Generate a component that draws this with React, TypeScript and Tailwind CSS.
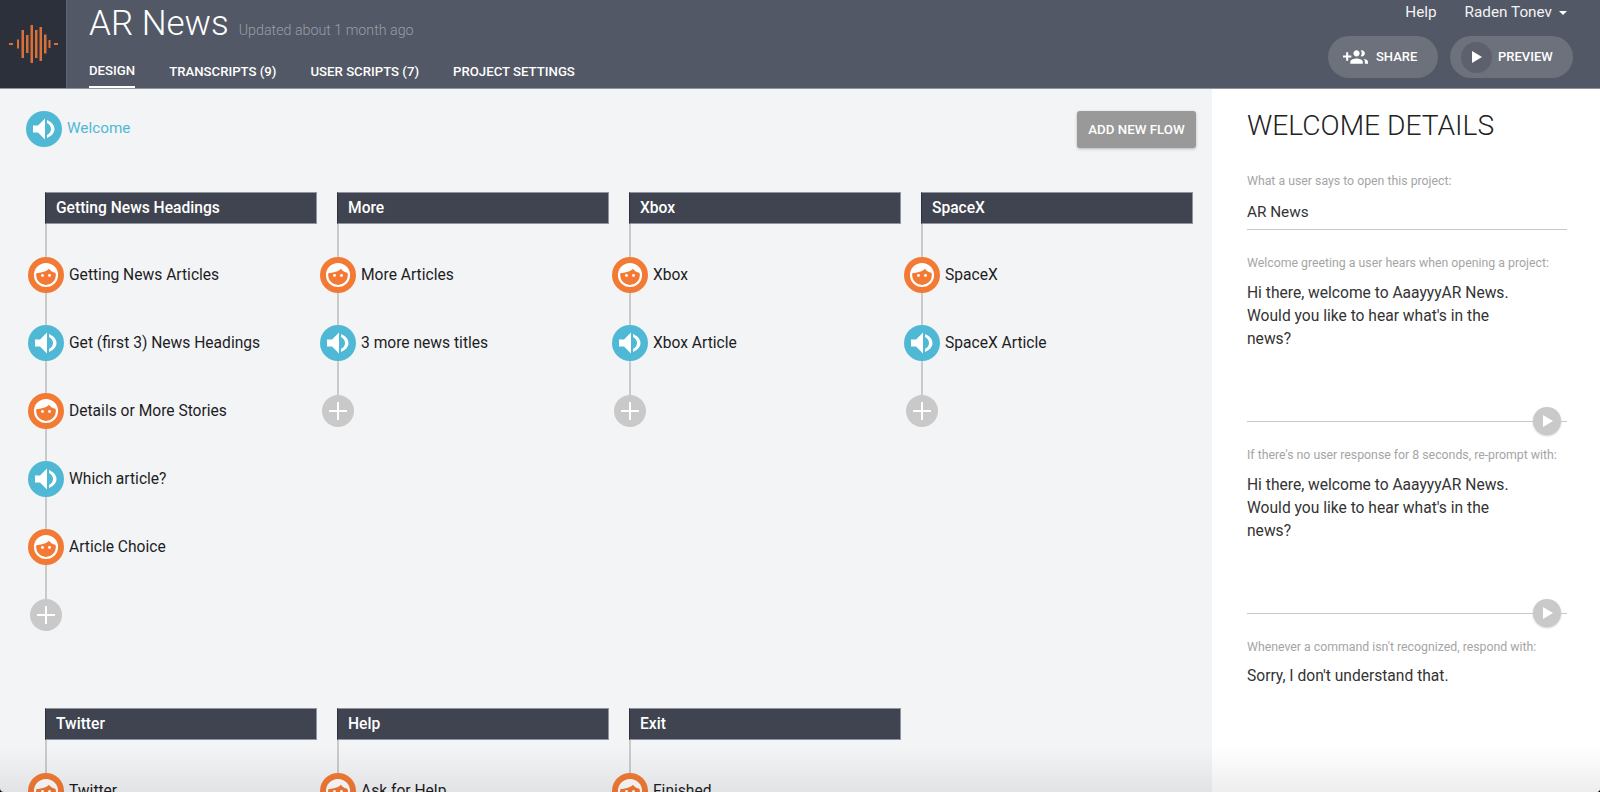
const flows = [
  {
    title: 'Getting News Headings',
    steps: [
      ['user', 'Getting News Articles'],
      ['bot', 'Get (first 3) News Headings'],
      ['user', 'Details or More Stories'],
      ['bot', 'Which article?'],
      ['user', 'Article Choice'],
    ],
  },
  { title: 'More', steps: [['user', 'More Articles'], ['bot', '3 more news titles']] },
  { title: 'Xbox', steps: [['user', 'Xbox'], ['bot', 'Xbox Article']] },
  { title: 'SpaceX', steps: [['user', 'SpaceX'], ['bot', 'SpaceX Article']] },
  { title: 'Twitter', steps: [['user', 'Twitter']] },
  { title: 'Help', steps: [['user', 'Ask for Help']] },
  { title: 'Exit', steps: [['user', 'Finished']] },
]

function Speaker() {
  return (
    <div className="w-9 h-9 shrink-0 rounded-full bg-[#4fb9d5] flex items-center justify-center">
      <svg width="36" height="36" viewBox="0 0 36 36" fill="white">
        <path d="M7 14.500h5l7-7v21l-7-7H7z" />
        <path d="M21 9c5.500 2.500 7.500 5.800 7.500 9s-2 6.500-7.500 9v-3c2.800-1.500 4-3.500 4-6s-1.200-4.500-4-6z" />
      </svg>
    </div>
  )
}

function Face() {
  return (
    <div className="w-9 h-9 shrink-0 rounded-full bg-[#f37a35] flex items-center justify-center">
      <svg width="36" height="36" viewBox="0 0 36 36">
        <circle cx="18" cy="18" r="11" fill="none" stroke="white" strokeWidth="2.200" />
        <path d="M7.200 16C8 10.500 12.500 7 18 7s10 3.500 10.800 9c-3.500-.3-6-1.800-7.800-4.200-2.500 2.700-7 4.200-13.800 4.200z" fill="white" />
        <circle cx="14.500" cy="18.500" r="1.400" fill="white" />
        <circle cx="21.500" cy="18.500" r="1.400" fill="white" />
      </svg>
    </div>
  )
}

function Play({ size }: { size: number }) {
  return (
    <svg width={size} height={size} viewBox="0 0 14 14" fill="white">
      <path d="M2 1l10 6-10 6z" />
    </svg>
  )
}

function Flow({ title, steps }: { title: string; steps: string[][] }) {
  return (
    <div className="w-[272px]">
      <div className="h-8 bg-[#3f4450] border border-[#8f94a0] border-l-[#2b303b] px-2.5 pt-[1px] flex items-center text-[15.6px] font-medium text-white">
        {title}
      </div>
      <div className="border-l-2 border-[#c9cacb] pt-[33px]">
        {steps.map(([kind, label]) => (
          <div key={label} className="flex items-center h-9 mb-8 -ml-[19px]">
            {kind === 'user' ? <Face /> : <Speaker />}
            <span className="ml-[5px] pt-[1px] text-[15.6px] text-[#1d1d1f]">{label}</span>
          </div>
        ))}
        <div className="w-8 h-8 mt-[34px] -ml-[17px] rounded-full bg-[#c9c9c9] flex items-center justify-center">
          <svg width="20" height="20" viewBox="0 0 20 20" stroke="white" strokeWidth="2">
            <path d="M10 1v18M1 10h18" />
          </svg>
        </div>
      </div>
    </div>
  )
}

function Player() {
  return (
    <div className="flex items-center h-7">
      <div className="flex-1 h-px bg-[#c8c8c8]" />
      <div className="w-7 h-7 rounded-full bg-[#c9c9c9] shadow-[0_1px_2px_rgba(0,0,0,0.2)] flex items-center justify-center pl-0.5">
        <Play size={14} />
      </div>
      <div className="w-[6px] h-px bg-[#c8c8c8]" />
    </div>
  )
}

export default function App() {
  return (
    <div className="h-[792px] bg-black">
      <div className="relative h-full rounded-b-[4px] overflow-hidden flex flex-col bg-[#f3f4f6] font-['Roboto',sans-serif]">
        {/* Top bar */}
        <header className="h-[89px] shrink-0 flex bg-[#525865] border-b border-[#8f939c] text-white">
          <div className="w-[67px] bg-[#2b303b] border-r border-[#5f6470] flex items-center justify-center pl-[3px]">
            <svg width="52" height="40" viewBox="0 0 52 40" fill="#d9703a">
              <rect x="0" y="19" width="4" height="2" />
              <rect x="8" y="15.500" width="2" height="9" />
              <rect x="12.500" y="6" width="2.500" height="28" />
              <rect x="17" y="11" width="2.500" height="18" />
              <rect x="21.500" y="1" width="2.500" height="38" />
              <rect x="26" y="6" width="2.500" height="28" />
              <rect x="30.500" y="3" width="2.500" height="34" />
              <rect x="35" y="10.500" width="2.500" height="19" />
              <rect x="39.500" y="16" width="2" height="8" />
              <rect x="45" y="19" width="4" height="2" />
            </svg>
          </div>
          <div className="flex-1 pl-[22px] flex flex-col">
            <div className="flex items-baseline h-[53px] pt-[2px]">
              <span className="text-[35px] font-light leading-[44px]">AR News</span>
              <span className="ml-[10px] text-[14.25px] font-light text-[#9a9ea8]">Updated about 1 month ago</span>
            </div>
            <nav className="flex gap-[34px] text-[13.2px] font-medium h-[35px]">
              <a className="flex items-center pt-[3px] border-b-2 border-white">DESIGN</a>
              <a className="flex items-center pt-[3px]">TRANSCRIPTS (9)</a>
              <a className="flex items-center pt-[3px]">USER SCRIPTS (7)</a>
              <a className="flex items-center pt-[3px]">PROJECT SETTINGS</a>
            </nav>
          </div>
          <div className="w-[272px] pr-[27px] flex flex-col items-end">
            <div className="h-[25px] flex items-center text-[15.3px] text-[#f2f3f5]">
              <span>Help</span>
              <span className="ml-7">Raden Tonev</span>
              <span className="ml-[7px] mr-[6px] border-x-4 border-t-4 border-x-transparent border-t-white" />
            </div>
            <div className="mt-[11px] flex gap-3 text-[13px] font-medium">
              <button className="w-[110px] h-[42px] rounded-full bg-[#6c717c] flex items-center pl-[15px]">
                <svg width="25" height="25" viewBox="0 0 24 24" fill="white" className="mr-[8px]">
                  <path d="M8 10H5V7H3v3H0v2h3v3h2v-3h3v-2zm10 1c1.660 0 2.990-1.340 2.990-3S19.660 5 18 5c-.32 0-.63.05-.93.14.57.81.9 1.790.9 2.860s-.34 2.040-.9 2.860c.3.09.61.14.93.14zm-5 0c1.660 0 2.990-1.340 2.990-3S14.660 5 13 5s-3 1.340-3 3 1.340 3 3 3zm6.620 2.160c.83.73 1.380 1.660 1.380 2.840v2h3v-2c0-1.540-2.370-2.490-4.380-2.840zM13 13c-2 0-6 1-6 3v2h12v-2c0-2-4-3-6-3z" />
                </svg>
                SHARE
              </button>
              <button className="w-[123px] h-[42px] rounded-full bg-[#6c717c] flex items-center pl-[11px]">
                <span className="w-[31px] h-[31px] rounded-full bg-[#5c616d] flex items-center justify-center mr-[6px]">
                  <Play size={14} />
                </span>
                PREVIEW
              </button>
            </div>
          </div>
        </header>

        <div className="flex-1 flex min-h-0">
          {/* Flow canvas */}
          <main className="w-[1212px] shrink-0 pl-[26px] pt-[22px]">
            <div className="flex items-start justify-between pr-4">
              <div className="flex items-center">
                <Speaker />
                <span className="ml-[5px] text-[15.3px] text-[#4fb9d5] -mt-[2px]">Welcome</span>
              </div>
              <button className="w-[119px] h-[37px] rounded-[3px] bg-[#999999] text-white text-[13.3px] font-medium shadow-[0_1px_3px_rgba(0,0,0,0.25)]">
                ADD NEW FLOW
              </button>
            </div>
            <div className="mt-[44px] ml-[19px] flex flex-wrap gap-x-5 gap-y-[77px]">
              {flows.map((f) => (
                <Flow key={f.title} title={f.title} steps={f.steps} />
              ))}
            </div>
          </main>

          {/* Details panel */}
          <aside className="flex-1 bg-white pl-[35px] pr-[33px]">
            <h2 className="mt-[19px] text-[28.2px] font-light leading-9 text-[#222]">WELCOME DETAILS</h2>
            <p className="mt-[29px] text-[12.3px] leading-4 text-[#a5a5a5]">What a user says to open this project:</p>
            <div className="mt-[11px] h-[30px] pt-[1px] border-b border-[#c8c8c8] text-[15.3px] text-[#333]">AR News</div>
            <p className="mt-[25px] text-[12.3px] leading-4 text-[#a5a5a5]">Welcome greeting a user hears when opening a project:</p>
            <p className="mt-[11px] w-[270px] h-[125px] text-[15.6px] leading-[23px] text-[#333]">
              Hi there, welcome to AaayyyAR News. Would you like to hear what's in the news?
            </p>
            <Player />
            <p className="mt-[12px] text-[12.3px] leading-4 text-[#a5a5a5]">If there's no user response for 8 seconds, re-prompt with:</p>
            <p className="mt-[11px] w-[270px] h-[125px] text-[15.6px] leading-[23px] text-[#333]">
              Hi there, welcome to AaayyyAR News. Would you like to hear what's in the news?
            </p>
            <Player />
            <p className="mt-[12px] text-[12.3px] leading-4 text-[#a5a5a5]">Whenever a command isn't recognized, respond with:</p>
            <p className="mt-[10px] text-[15.6px] leading-[23px] text-[#333]">Sorry, I don't understand that.</p>
          </aside>
        </div>

        {/* Fade over the bottom edge */}
        <div className="absolute bottom-0 inset-x-0 h-[45px] bg-gradient-to-b from-transparent to-black/[0.07] pointer-events-none" />
      </div>
    </div>
  )
}
